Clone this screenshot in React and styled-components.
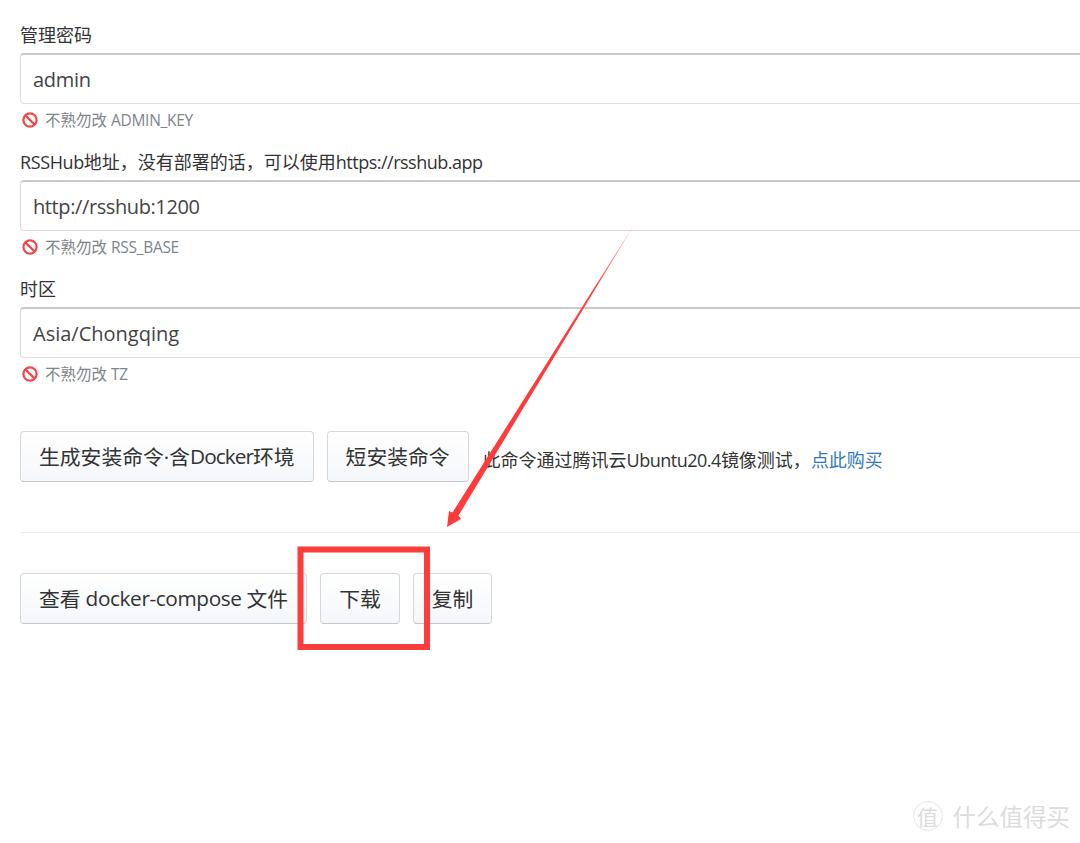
import styled, { createGlobalStyle } from 'styled-components';

const GlobalStyle = createGlobalStyle`
  html, body {
    margin: 0;
    padding: 0;
    background: #fff;
    overflow: hidden;
  }
`;

const fontStack = `"Open Sans", "Noto Sans CJK SC", sans-serif`;

const Page = styled.div`
  position: relative;
  width: 1080px;
  height: 843px;
  overflow: hidden;
  box-sizing: border-box;
  padding: 23px 0 0 20px;
  font-family: ${fontStack};
  color: #333;
`;

const Field = styled.div`
  height: 127px;
`;

const Label = styled.div`
  font-size: 18px;
  line-height: 24px;
  height: 30px;
`;

// latin runs in the original font are narrower than Open Sans
const Latin = styled.span`
  letter-spacing: ${({ $tight }) => $tight || -0.5}px;
`;

const Input = styled.div`
  box-sizing: border-box;
  width: 1100px;
  height: 51px;
  padding: 0 12px;
  display: flex;
  align-items: center;
  background: #fff;
  border: 1px solid #ddd;
  border-top: 2px solid #c9c9c9;
  border-radius: 4px;
  font-size: 20px;
  color: #444;
  letter-spacing: ${({ $tight }) => $tight || 0}px;
`;

const Hint = styled.div`
  display: flex;
  align-items: center;
  gap: 7px;
  height: 31px;
  padding-left: 2px;
  font-size: 15.5px;
  color: #7d858c;
`;

const Actions = styled.div`
  display: flex;
  align-items: center;
  gap: 13px;
  margin-top: 27px;
`;

const Button = styled.div`
  box-sizing: border-box;
  height: 51px;
  padding: 0 18px 2px;
  display: flex;
  align-items: center;
  white-space: pre;
  border: 1px solid #d5d8db;
  border-bottom-color: #c4c8cc;
  border-radius: 4px;
  background: linear-gradient(#fff, #f4f7fa);
  font-size: 20.8px;
  color: #333;
`;

const Note = styled.div`
  font-size: 18px;
  margin: 5px 0 0 1px;
  color: #333;
  white-space: nowrap;
`;

const BuyLink = styled.span`
  color: #337ab7;
`;

const Divider = styled.div`
  height: 1px;
  background: #eee;
  width: 1060px;
  margin-top: 50px;
`;

const ComposeActions = styled(Actions)`
  margin-top: 40px;
`;

const Overlay = styled.svg`
  position: absolute;
  left: 0;
  top: 0;
  pointer-events: none;
`;

const Watermark = styled.div`
  position: absolute;
  right: 10px;
  bottom: 10px;
  display: flex;
  align-items: center;
  gap: 10px;
  color: #dcdcdc;
  font-size: 23.5px;
  white-space: nowrap;
`;

const Seal = styled.div`
  width: 28px;
  height: 28px;
  border: 1px solid #e6e6e6;
  border-radius: 50%;
  display: flex;
  align-items: center;
  justify-content: center;
  font-size: 21px;
`;

const NoEntry = () => (
  <svg width="16" height="16" viewBox="0 0 16 16" fill="none">
    <circle cx="8" cy="8" r="6.6" stroke="#f0494b" strokeWidth="2.2" />
    <path d="M3.6 3.6 12.4 12.4" stroke="#f0494b" strokeWidth="2.2" />
  </svg>
);

const fields = [
  { label: '管理密码', value: 'admin', tight: -0.3, hint: 'ADMIN_KEY' },
  {
    label: <><Latin $tight={-0.4}>RSSHub</Latin>地址，没有部署的话，可以使用<Latin>https://rsshub.app</Latin></>,
    value: 'http://rsshub:1200',
    tight: -0.4,
    hint: 'RSS_BASE',
  },
  { label: '时区', value: 'Asia/Chongqing', hint: 'TZ' },
];

export default function App() {
  return (
    <Page>
      <GlobalStyle />
      {fields.map((field) => (
        <Field key={field.value}>
          <Label>{field.label}</Label>
          <Input $tight={field.tight}>{field.value}</Input>
          <Hint>
            <NoEntry />
            <span>不熟勿改 <Latin $tight={-0.3}>{field.hint}</Latin></span>
          </Hint>
        </Field>
      ))}

      <Actions>
        <Button>生成安装命令·含<Latin $tight={-0.95}>Docker</Latin>环境</Button>
        <Button>短安装命令</Button>
        <Note>
          此命令通过腾讯云<Latin>Ubuntu20.4</Latin>镜像测试，<BuyLink>点此购买</BuyLink>
        </Note>
      </Actions>

      <Divider />

      <ComposeActions>
        <Button>查看<Latin $tight={-0.4}> docker-compose </Latin>文件</Button>
        <Button>下载</Button>
        <Button>复制</Button>
      </ComposeActions>

      <Overlay width="1080" height="843" viewBox="0 0 1080 843">
        <defs>
          <linearGradient id="arrowFade" gradientUnits="userSpaceOnUse" x1="637" y1="220" x2="595" y2="288">
            <stop offset="0" stopColor="#ff3b3b" stopOpacity="0.3" />
            <stop offset="1" stopColor="#ff3b3b" />
          </linearGradient>
        </defs>
        <path d="M637 220 458.500 515.500 461 519 447 527 449 511 452.500 512.500Z" fill="url(#arrowFade)" />
        <rect x="300.500" y="549.500" width="126.500" height="97.500" fill="none" stroke="#fd3c3c" strokeWidth="6" />
      </Overlay>

      <Watermark>
        <Seal>值</Seal>
        什么值得买
      </Watermark>
    </Page>
  );
}
